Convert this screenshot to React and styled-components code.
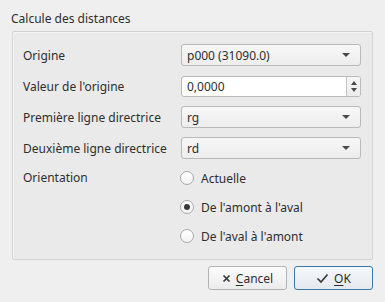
import React, { useState } from "react";
import styled, { createGlobalStyle } from "styled-components";

const GlobalStyle = createGlobalStyle`
  html, body {
    margin: 0;
    padding: 0;
    background: #efefef;
  }
  body {
    font-family: "Noto Sans", "DejaVu Sans", sans-serif;
    font-size: 12px;
    color: #2e2e2e;
  }
`;

const Dialog = styled.div`
  width: 385px;
  height: 302px;
  box-sizing: border-box;
  padding: 9px 12px 0 11px;
  display: flex;
  flex-direction: column;
`;

const Title = styled.div`
  height: 19px;
  line-height: 19px;
  margin-bottom: 3px;
`;

const GroupBox = styled.div`
  margin-left: 1px;
  height: 229px;
  box-sizing: border-box;
  border: 1px solid #d3d3d3;
  border-radius: 2px;
  background: #eaeaea;
  box-shadow: inset 1px 1px 0 #f4f4f4;
  padding: 12px 11px 0 10px;
  display: grid;
  grid-template-columns: 158px 180px;
  grid-auto-rows: 22px;
  row-gap: 9px;
  align-items: center;
`;

const Label = styled.div`
  align-self: ${(p) => (p.top ? "start" : "center")};
  line-height: ${(p) => (p.top ? "20px" : "normal")};
`;

const Combo = styled.div`
  height: 22px;
  box-sizing: border-box;
  border: 1px solid #b9b9b9;
  border-radius: 3px;
  background: linear-gradient(#f7f7f7, #ededed);
  display: flex;
  align-items: center;
  padding: 0 10px 0 5px;
  justify-content: space-between;
`;

const Arrow = styled.span`
  width: 0;
  height: 0;
  border-left: 4px solid transparent;
  border-right: 4px solid transparent;
  border-top: 4px solid #4a4a4a;
`;

const Spin = styled.div`
  height: 21px;
  box-sizing: border-box;
  border: 1px solid #b9b9b9;
  border-radius: 3px;
  background: #ffffff;
  display: flex;
  align-items: stretch;
`;

const SpinText = styled.div`
  flex: 1;
  display: flex;
  align-items: center;
  padding-left: 5px;
`;

const SpinButtons = styled.div`
  width: 13px;
  border-left: 1px solid #c4c4c4;
  background: linear-gradient(#f6f6f6, #ececec);
  border-radius: 0 2px 2px 0;
  display: flex;
  flex-direction: column;
  align-items: center;
  justify-content: center;
  gap: 3px;
`;

const SmallTri = styled.span`
  width: 0;
  height: 0;
  border-left: 3.5px solid transparent;
  border-right: 3.5px solid transparent;
  ${(p) =>
    p.up
      ? "border-bottom: 4px solid #4a4a4a;"
      : "border-top: 4px solid #4a4a4a;"}
`;

const RadioList = styled.div`
  grid-row: span 3;
  align-self: start;
  display: flex;
  flex-direction: column;
  gap: 9px;
  margin-left: -1px;
`;

const RadioRow = styled.label`
  height: 20px;
  display: flex;
  align-items: center;
  gap: 7px;
  cursor: pointer;
`;

const RadioCircle = styled.span`
  width: 12px;
  height: 12px;
  border-radius: 50%;
  border: 1px solid #a9a9a9;
  background: linear-gradient(#ffffff, #f3f3f3);
  display: flex;
  align-items: center;
  justify-content: center;
  &::after {
    content: "";
    width: 6px;
    height: 6px;
    border-radius: 50%;
    background: ${(p) => (p.checked ? "#3a3a3a" : "transparent")};
  }
`;

const Buttons = styled.div`
  display: flex;
  justify-content: flex-end;
  gap: 7px;
  margin-top: 6px;
`;

const Button = styled.button`
  width: 79px;
  height: 24px;
  box-sizing: border-box;
  border: 1px solid ${(p) => (p.primary ? "#3a78a8" : "#b3b3b3")};
  border-radius: 3px;
  background: ${(p) =>
    p.primary
      ? "linear-gradient(#f5f8fb, #e4e9ee)"
      : "linear-gradient(#fbfbfb, #ececec)"};
  font-family: inherit;
  font-size: 12px;
  color: #2e2e2e;
  display: flex;
  align-items: center;
  justify-content: center;
  gap: 5px;
  padding: 0;
  u {
    text-decoration: underline;
    text-underline-offset: 2px;
  }
`;

const options = ["Actuelle", "De l'amont à l'aval", "De l'aval à l'amont"];

export default function App() {
  const [orient, setOrient] = useState(1);
  return (
    <>
      <GlobalStyle />
      <Dialog>
        <Title>Calcule des distances</Title>
        <GroupBox>
          <Label>Origine</Label>
          <Combo>
            <span>p000 (31090.0)</span>
            <Arrow />
          </Combo>
          <Label>Valeur de l'origine</Label>
          <Spin>
            <SpinText>0,0000</SpinText>
            <SpinButtons>
              <SmallTri up />
              <SmallTri />
            </SpinButtons>
          </Spin>
          <Label>Première ligne directrice</Label>
          <Combo>
            <span>rg</span>
            <Arrow />
          </Combo>
          <Label>Deuxième ligne directrice</Label>
          <Combo>
            <span>rd</span>
            <Arrow />
          </Combo>
          <Label top>Orientation</Label>
          <RadioList>
            {options.map((o, i) => (
              <RadioRow key={o} onClick={() => setOrient(i)}>
                <RadioCircle checked={orient === i} />
                {o}
              </RadioRow>
            ))}
          </RadioList>
        </GroupBox>
        <Buttons>
          <Button>
            <svg width="9" height="9" viewBox="0 0 9 9">
              <path d="M1.5 1.5 L7.5 7.5 M7.5 1.5 L1.5 7.5" stroke="#3a3a3a" strokeWidth="1.7" />
            </svg>
            <span>
              <u>C</u>ancel
            </span>
          </Button>
          <Button primary>
            <svg width="13" height="11" viewBox="0 0 13 11">
              <path d="M1.5 5.5 L5 9 L11.5 1.5" stroke="#3a3a3a" strokeWidth="1.7" fill="none" />
            </svg>
            <span>
              <u>O</u>K
            </span>
          </Button>
        </Buttons>
      </Dialog>
    </>
  );
}
